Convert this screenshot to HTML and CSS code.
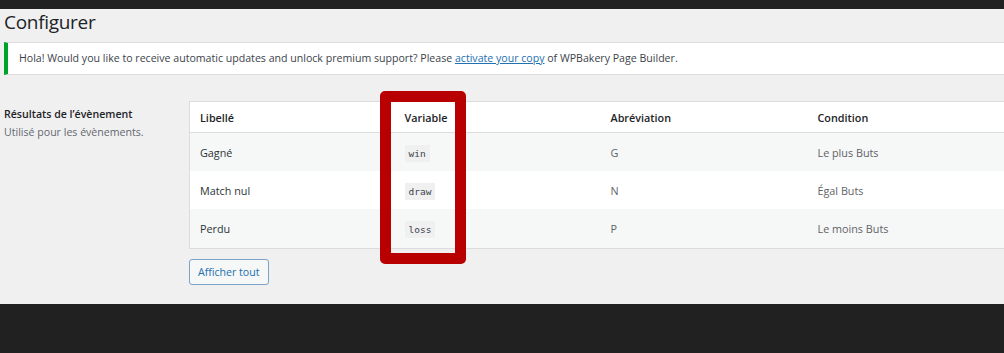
FILE: index.html
```html
<!DOCTYPE html>
<html>
<head>
<title>Configurer</title>
<link rel="stylesheet" href="styles.css">
</head>
<body>

<div class="topbar"></div>

<div class="wrap">
  <h1>Configurer</h1>

  <div class="notice">
    <p>Hola! Would you like to receive automatic updates and unlock premium support? Please <a href="#">activate your copy</a> of WPBakery Page Builder.</p>
  </div>

  <div class="section">
    <div class="label">
      <strong>Résultats de l’évènement</strong>
      <p>Utilisé pour les évènements.</p>
    </div>
    <div class="field">
      <table class="results">
        <colgroup>
          <col class="c1"><col class="c2"><col class="c3"><col class="c4">
        </colgroup>
        <thead>
          <tr><th>Libellé</th><th>Variable</th><th>Abréviation</th><th>Condition</th></tr>
        </thead>
        <tbody>
          <tr class="alt"><td class="name">Gagné</td><td><code>win</code></td><td>G</td><td>Le plus Buts</td></tr>
          <tr><td class="name">Match nul</td><td><code>draw</code></td><td>N</td><td>Égal Buts</td></tr>
          <tr class="alt"><td class="name">Perdu</td><td><code>loss</code></td><td>P</td><td>Le moins Buts</td></tr>
        </tbody>
      </table>
      <button class="btn">Afficher tout</button>
    </div>
  </div>

  <!-- red marker drawn over the Variable column -->
  <div class="highlight"></div>
</div>

<div class="bottom"></div>

</body>
</html>
```

FILE: styles.css
```css
html {
  background-color: #212121;
}

body {
  margin: 0px;
  overflow: hidden;
  font-family: "Open Sans", "Noto Sans", sans-serif;
  color: #3c434a;
}

.topbar {
  height: 9px;
  background-color: #212121;
}

.wrap {
  position: relative;
  height: 295px;
  background-color: #f0f0f1;
  padding-left: 4px;
  overflow: hidden;
}

h1 {
  margin: 0;
  font-size: 19px;
  letter-spacing: -0.3px;
  font-weight: 400;
  line-height: 26px;
  color: #1d2327;
}

.notice {
  margin-top: 7px;
  background-color: white;
  border: 1px solid #dcdcde;
  border-left: 4px solid #00a32a;
  border-right: 0;
  height: 31px;
}

.notice p {
  margin: 0;
  padding-left: 11px;
  font-size: 10.6px;
  line-height: 31px;
}

.notice a {
  color: #2271b1;
}

.section {
  display: flex;
  margin-top: 26px;
}

.label {
  width: 185px;
  flex-shrink: 0;
  padding-top: 5px;
  font-size: 10.6px;
}

.label strong {
  display: block;
  font-weight: 600;
  color: #1d2327;
  line-height: 16px;
}

.label p {
  margin: 2px 0 0 0;
  color: #646970;
  line-height: 16px;
}

.results {
  border-collapse: collapse;
  width: 828px;
  table-layout: fixed;
  background-color: white;
  border: 1px solid #dcdcde;
  border-right: 0;
  font-size: 10.8px;
}

.results .c1 { width: 205px; }
.results .c2 { width: 206px; }
.results .c3 { width: 207px; }
.results .c4 { width: 210px; }

.results th {
  text-align: left;
  font-weight: 600;
  color: #1d2327;
  height: 30px;
  padding: 0 0 0 10px;
  border-bottom: 1px solid #dcdcde;
}

.results td {
  height: 38px;
  padding: 0 0 0 10px;
  color: #5f6368;
}

.results td.name {
  color: #2c3338;
}

.results tr.alt td {
  background-color: #f6f7f7;
}

.results tbody tr:last-child td {
  height: 39px;
}

code {
  font-family: "DejaVu Sans Mono", monospace;
  font-size: 9.5px;
  background-color: #f0f0f1;
  color: #3c434a;
  padding: 3px 4px;
}

.btn {
  display: block;
  margin-top: 10px;
  height: 26px;
  padding: 0 8px;
  font-family: "Open Sans", "Noto Sans", sans-serif;
  font-size: 10.6px;
  color: #2271b1;
  background-color: #f6f7f7;
  border: 1px solid #7aa3c9;
  border-radius: 3px;
}

.highlight {
  position: absolute;
  left: 380px;
  top: 82px;
  width: 64px;
  height: 151px;
  border: 11px solid #b80000;
  border-radius: 5px;
}

.bottom {
  height: 49px;
  background-color: #212121;
}
```
